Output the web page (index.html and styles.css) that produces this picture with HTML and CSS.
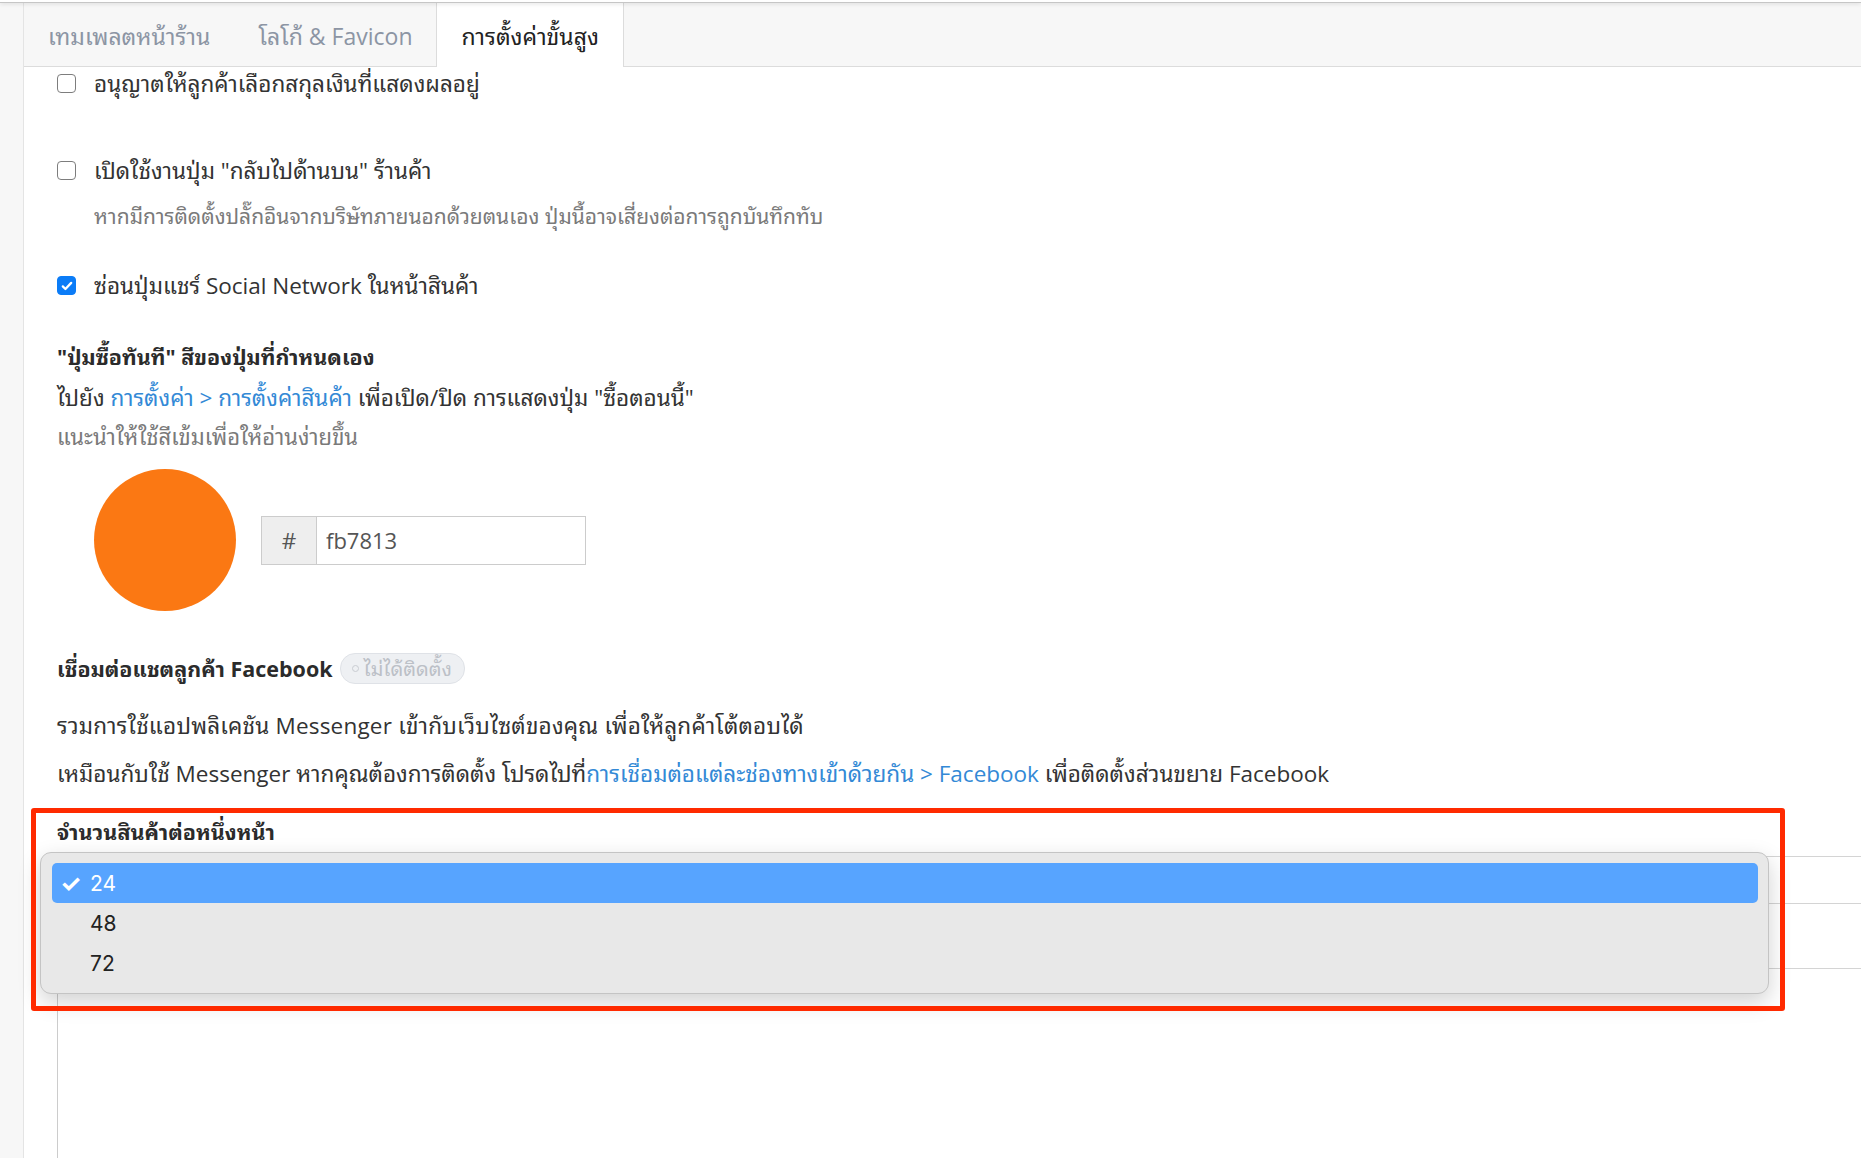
FILE: index.html
```html
<!DOCTYPE html>
<html lang="th">
<head>
    <meta charset="UTF-8">
    <meta name="viewport" content="width=device-width, initial-scale=1.0">
    <title>การตั้งค่าขั้นสูง</title>
    <link rel="stylesheet" href="styles.css">
</head>
<body>
    <div class="top-line"></div>
    <div class="page">
        <aside class="sidebar"></aside>

        <main class="panel">
            <nav class="tabs">
                <a class="tab">เทมเพลตหน้าร้าน</a>
                <a class="tab">โลโก้ &amp; Favicon</a>
                <a class="tab active">การตั้งค่าขั้นสูง</a>
            </nav>

            <div class="content">
                <!-- Store options -->
                <label class="check-row">
                    <span class="box"></span>
                    อนุญาตให้ลูกค้าเลือกสกุลเงินที่แสดงผลอยู่
                </label>

                <label class="check-row row-gap">
                    <span class="box"></span>
                    เปิดใช้งานปุ่ม "กลับไปด้านบน" ร้านค้า
                </label>
                <p class="hint hint-small">หากมีการติดตั้งปลั๊กอินจากบริษัทภายนอกด้วยตนเอง ปุ่มนี้อาจเสี่ยงต่อการถูกบันทึกทับ</p>

                <label class="check-row row-gap-sm">
                    <span class="box checked">
                        <svg viewBox="0 0 16 16" width="14" height="14"><path d="M3.2 8.4l3 3 6.6-7" fill="none" stroke="#fff" stroke-width="2.6" stroke-linecap="round" stroke-linejoin="round"/></svg>
                    </span>
                    ซ่อนปุ่มแชร์ Social Network ในหน้าสินค้า
                </label>

                <!-- Buy now button colour -->
                <h4 class="section-title">"ปุ่มซื้อทันที" สีของปุ่มที่กำหนดเอง</h4>
                <p class="line">ไปยัง <a class="link">การตั้งค่า &gt; การตั้งค่าสินค้า</a> เพื่อเปิด/ปิด การแสดงปุ่ม "ซื้อตอนนี้"</p>
                <p class="hint">แนะนำให้ใช้สีเข้มเพื่อให้อ่านง่ายขึ้น</p>

                <div class="color-row">
                    <div class="swatch"></div>
                    <div class="input-group">
                        <span class="addon">#</span>
                        <input class="color-input" type="text" value="fb7813">
                    </div>
                </div>

                <!-- Facebook chat -->
                <h4 class="section-title fb-title">
                    เชื่อมต่อแชตลูกค้า Facebook
                    <span class="badge"><span class="dot"></span>ไม่ได้ติดตั้ง</span>
                </h4>
                <p class="line para-1">รวมการใช้แอปพลิเคชัน Messenger เข้ากับเว็บไซต์ของคุณ เพื่อให้ลูกค้าโต้ตอบได้</p>
                <p class="line para-2">เหมือนกับใช้ Messenger หากคุณต้องการติดตั้ง โปรดไปที่<a class="link">การเชื่อมต่อแต่ละช่องทางเข้าด้วยกัน &gt; Facebook</a> เพื่อติดตั้งส่วนขยาย Facebook</p>

                <!-- Products per page -->
                <div class="per-page">
                    <h4 class="section-title field-label">จำนวนสินค้าต่อหนึ่งหน้า</h4>
                    <div class="list-area">
                        <div class="select-box"></div>
                        <div class="below-box"></div>
                    </div>

                    <ul class="popup">
                        <li class="option selected"><span class="tick">✓</span>24</li>
                        <li class="option"><span class="tick"></span>48</li>
                        <li class="option"><span class="tick"></span>72</li>
                    </ul>
                    <div class="highlight-frame"></div>
                </div>
            </div>
        </main>
    </div>
</body>
</html>
```

FILE: styles.css
```css
html, body {
    margin: 0;
    padding: 0;
    height: 100%;
    overflow: hidden;
}

body {
    font-family: 'Open Sans', 'Noto Sans Thai Looped', 'Loma', 'Garuda', 'Waree', 'Noto Sans Thai', 'Noto Sans', sans-serif;
    font-size: 22.5px;
    color: #333;
    background-color: #fff;
}

.top-line {
    height: 2px;
    border-bottom: 1px solid #c6c6c6;
    box-shadow: 0 1px 4px rgba(0, 0, 0, 0.12);
    position: relative;
    z-index: 2;
}

.page {
    display: flex;
    height: calc(100% - 3px);
}

.sidebar {
    width: 23px;
    flex: none;
    background-color: #f7f7f7;
    border-right: 1px solid #e4e4e4;
}

.panel {
    flex: 1;
    min-width: 0;
}

/* Tabs */
.tabs {
    display: flex;
    height: 63px;
    background-color: #f7f7f7;
    border-bottom: 1px solid #dcdcdc;
}

.tab {
    display: flex;
    align-items: center;
    padding: 0 24px 2px;
    font-size: 23px;
    color: #8c95a4;
    margin-bottom: -1px;
}

.tab.active {
    background-color: #fff;
    color: #222;
    border-left: 1px solid #dcdcdc;
    border-right: 1px solid #dcdcdc;
}

/* Content */
.content {
    padding-left: 33px;
}

p, h4 {
    margin: 0;
}

.check-row {
    display: flex;
    align-items: center;
    gap: 18px;
    line-height: 33px;
}

.row-gap {
    margin-top: 54px;
}

.row-gap-sm {
    margin-top: 39px;
}

.box {
    width: 17px;
    height: 17px;
    flex: none;
    border: 1.5px solid #7d7d7d;
    border-radius: 4px;
    background-color: #fff;
    display: flex;
    align-items: center;
    justify-content: center;
}

.box.checked {
    background-color: #0b7cf7;
    border-color: #0b7cf7;
}

.hint {
    font-size: 22px;
    line-height: 30px;
    color: #7a7a7a;
    margin-top: 7px;
}

.hint-small {
    font-size: 21px;
    line-height: 28px;
    padding-left: 37px;
    margin-top: 15px;
}

.section-title {
    font-size: 21.5px;
    font-weight: bold;
    line-height: 33px;
    margin-top: 38px;
    color: #2b2b2b;
}

.line {
    line-height: 33px;
    margin-top: 8px;
}

.link {
    color: #3389d6;
}

/* Colour picker row */
.color-row {
    display: flex;
    align-items: center;
    gap: 25px;
    margin-top: 18px;
    padding-left: 37px;
}

.swatch {
    width: 142px;
    height: 142px;
    border-radius: 50%;
    background-color: #fb7813;
}

.input-group {
    display: flex;
    width: 325px;
    height: 49px;
    border: 1px solid #cccccc;
    box-sizing: border-box;
}

.addon {
    width: 54px;
    display: flex;
    align-items: center;
    justify-content: center;
    background-color: #eeeeee;
    border-right: 1px solid #cccccc;
    color: #555;
}

.color-input {
    flex: 1;
    min-width: 0;
    border: none;
    outline: none;
    padding: 0 9px;
    font-family: inherit;
    font-size: 22px;
    color: #555;
}

/* Facebook block */
.fb-title {
    display: flex;
    align-items: center;
    gap: 7px;
    margin-top: 41px;
}

.badge {
    display: inline-flex;
    align-items: center;
    gap: 5px;
    height: 29px;
    padding: 0 12px 0 11px;
    border: 1px solid #dfe2e7;
    border-radius: 15px;
    background-color: #eef0f3;
    color: #bcc0c7;
    font-size: 20px;
    font-weight: normal;
}

.dot {
    width: 5px;
    height: 5px;
    border: 1px solid #c9ccd2;
    border-radius: 50%;
}

.para-1 {
    margin-top: 24px;
    letter-spacing: 0.2px;
}

.para-2 {
    margin-top: 15px;
}

/* Products per page */
.per-page {
    position: relative;
    margin-top: 25px;
}

.field-label {
    margin-top: 0;
}

.list-area {
    margin-top: 8px;
    border-left: 1px solid #cccccc;
    height: 320px;
}

.select-box {
    height: 46px;
    border-top: 1px solid #d4d4d4;
    border-bottom: 1px solid #d4d4d4;
}

.below-box {
    margin-top: 64px;
    border-top: 1px solid #d4d4d4;
}

.popup {
    position: absolute;
    left: -17px;
    top: 37px;
    width: 1729px;
    box-sizing: border-box;
    margin: 0;
    padding: 10px 10px 10px 11px;
    list-style: none;
    background-color: #e8e8e8;
    border: 1px solid #c4c4c4;
    border-radius: 11px;
    box-shadow: 0 8px 22px rgba(0, 0, 0, 0.18);
    font-family: Inter, 'Liberation Sans', sans-serif;
    font-size: 21px;
    color: #222;
}

.option {
    display: flex;
    align-items: center;
    height: 40px;
    padding-left: 8px;
    border-radius: 5px;
}

.option.selected {
    background-color: #57a4ff;
    color: #fff;
}

.tick {
    width: 30px;
    font-size: 24px;
    font-weight: bold;
}

.highlight-frame {
    position: absolute;
    left: -26px;
    top: -7px;
    width: 1754px;
    height: 203px;
    box-sizing: border-box;
    border: 5px solid #ff2a00;
    border-radius: 3px;
}
```
